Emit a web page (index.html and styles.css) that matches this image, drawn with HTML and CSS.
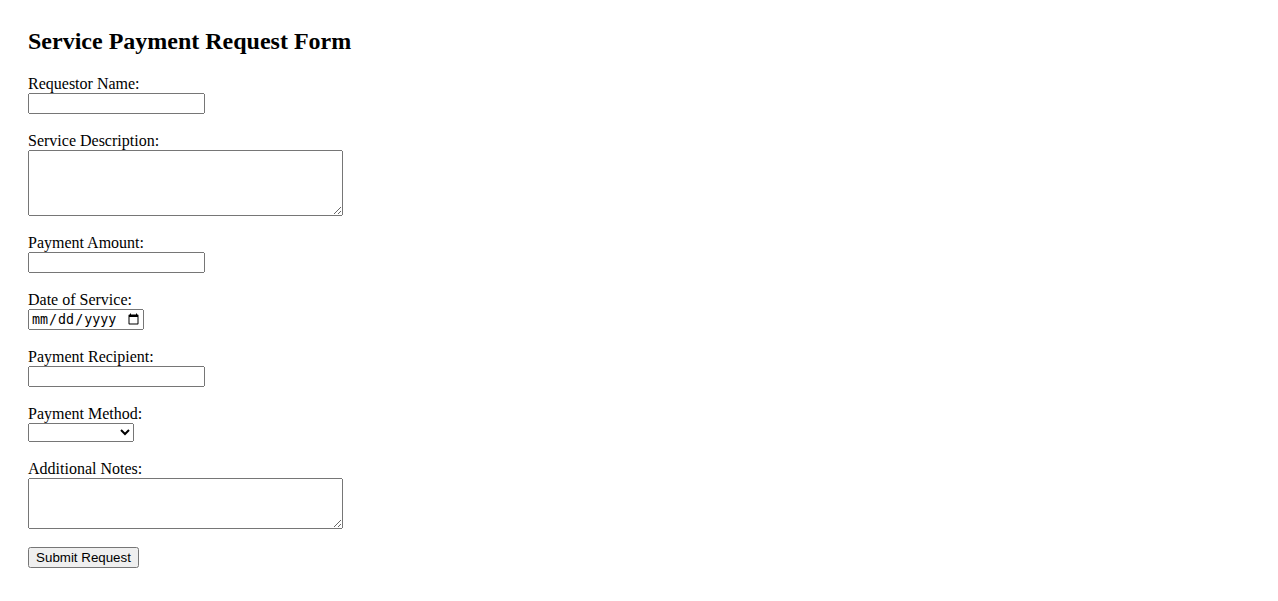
FILE: index.html
```html
<!DOCTYPE html>
<html lang="en">
<head>
<meta charset="utf-8">
<title>Service Payment Request Form</title>
<link rel="stylesheet" href="styles.css">
</head>
<body>
<h2 class="title">Service Payment Request Form</h2>
<form class="form">
  <div class="field">
    <label class="label" for="name">Requestor Name:</label>
    <input class="text" type="text" id="name">
  </div>
  <div class="field">
    <label class="label" for="desc">Service Description:</label>
    <textarea class="area area-lg" id="desc"></textarea>
  </div>
  <div class="field">
    <label class="label" for="amount">Payment Amount:</label>
    <input class="text" type="text" id="amount">
  </div>
  <div class="field">
    <label class="label" for="date">Date of Service:</label>
    <input class="date" type="date" id="date">
  </div>
  <div class="field">
    <label class="label" for="recipient">Payment Recipient:</label>
    <input class="text" type="text" id="recipient">
  </div>
  <div class="field">
    <label class="label" for="method">Payment Method:</label>
    <select class="select" id="method">
      <option></option>
    </select>
  </div>
  <div class="field">
    <label class="label" for="notes">Additional Notes:</label>
    <textarea class="area area-sm" id="notes"></textarea>
  </div>
  <div class="field">
    <button class="submit" type="submit">Submit Request</button>
  </div>
</form>
</body>
</html>
```
FILE: styles.css
```css
html, body {
  background: #ffffff;
}
body {
  margin: 0;
  padding: 28px;
  font-family: "Liberation Serif", "Times New Roman", serif;
  font-size: 16px;
  color: #000;
}
.title {
  margin: 0 0 20px;
  font-size: 24px;
  font-weight: bold;
}
.form {
  margin: 0;
}
.field {
  margin-bottom: 18px;
}
.label {
  display: block;
  height: 18px;
  line-height: 18px;
}
.text, .date, .select, .area, .submit {
  display: block;
  box-sizing: border-box;
  margin: 0;
}
.text {
  width: 177px;
  height: 21px;
}
.date {
  width: 116px;
  height: 21px;
}
.select {
  width: 106px;
  height: 19px;
}
.area {
  width: 315px;
}
.area-lg {
  height: 66px;
}
.area-sm {
  height: 51px;
}
.submit {
  width: 111px;
  height: 21px;
  font-family: "Liberation Sans", Arial, sans-serif;
  font-size: 13.33px;
  padding: 1px 6px;
}
```
